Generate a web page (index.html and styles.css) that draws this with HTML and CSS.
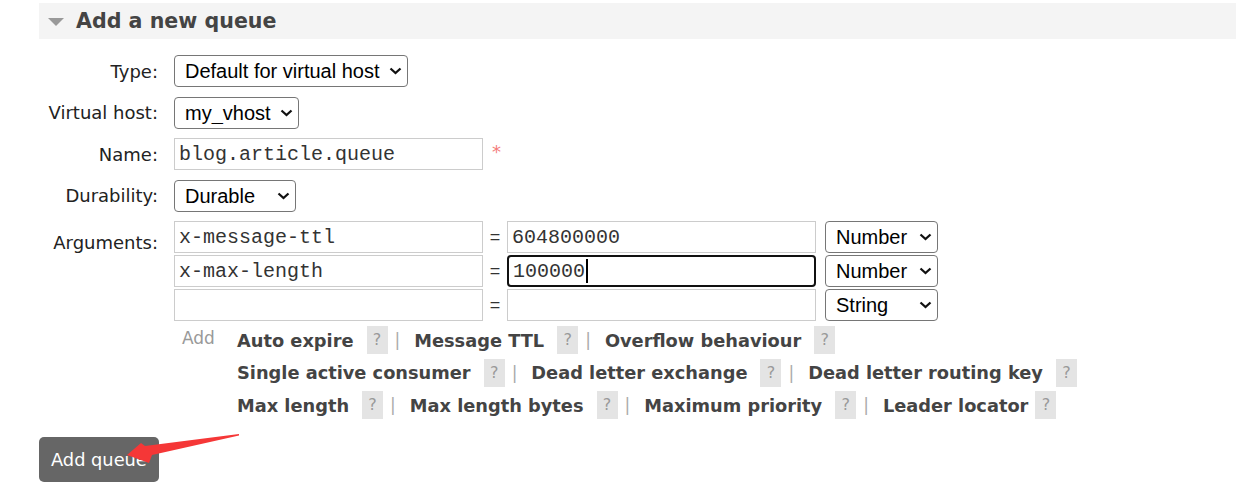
FILE: index.html
```html
<!DOCTYPE html>
<html lang="en">
<head>
    <meta charset="UTF-8">
    <meta name="viewport" content="width=device-width, initial-scale=1.0">
    <title>Queues</title>
    <link rel="stylesheet" href="styles.css">
</head>
<body>
    <div class="page">
        <div class="section-head">
            <span class="toggle"></span>
            <h2>Add a new queue</h2>
        </div>

        <form class="queue-form">
            <label class="field-label">Type:</label>
            <div class="field">
                <span class="select-wrap">
                    <select class="sel sel-type"><option>Default for virtual host</option></select>
                    <svg class="chevron" width="13" height="8" viewBox="0 0 13 8"><path d="M1.5 1.5 L6.5 6 L11.5 1.5" fill="none" stroke="#111" stroke-width="2.3"/></svg>
                </span>
            </div>

            <label class="field-label">Virtual host:</label>
            <div class="field">
                <span class="select-wrap">
                    <select class="sel sel-vhost"><option>my_vhost</option></select>
                    <svg class="chevron" width="13" height="8" viewBox="0 0 13 8"><path d="M1.5 1.5 L6.5 6 L11.5 1.5" fill="none" stroke="#111" stroke-width="2.3"/></svg>
                </span>
            </div>

            <label class="field-label">Name:</label>
            <div class="field">
                <input type="text" class="text-input" value="blog.article.queue">
                <span class="required">*</span>
            </div>

            <label class="field-label">Durability:</label>
            <div class="field">
                <span class="select-wrap">
                    <select class="sel sel-durability"><option>Durable</option></select>
                    <svg class="chevron" width="13" height="8" viewBox="0 0 13 8"><path d="M1.5 1.5 L6.5 6 L11.5 1.5" fill="none" stroke="#111" stroke-width="2.3"/></svg>
                </span>
            </div>

            <label class="field-label args-label">Arguments:</label>
            <div class="args">
                <div class="arg-row">
                    <input type="text" class="text-input" value="x-message-ttl">
                    <span class="eq">=</span>
                    <input type="text" class="text-input" value="604800000">
                    <span class="select-wrap arg-type">
                        <select class="sel sel-argtype"><option>Number</option></select>
                        <svg class="chevron" width="13" height="8" viewBox="0 0 13 8"><path d="M1.5 1.5 L6.5 6 L11.5 1.5" fill="none" stroke="#111" stroke-width="2.3"/></svg>
                    </span>
                </div>
                <div class="arg-row">
                    <input type="text" class="text-input" value="x-max-length">
                    <span class="eq">=</span>
                    <div class="text-input focused">100000<span class="caret"></span></div>
                    <span class="select-wrap arg-type">
                        <select class="sel sel-argtype"><option>Number</option></select>
                        <svg class="chevron" width="13" height="8" viewBox="0 0 13 8"><path d="M1.5 1.5 L6.5 6 L11.5 1.5" fill="none" stroke="#111" stroke-width="2.3"/></svg>
                    </span>
                </div>
                <div class="arg-row">
                    <input type="text" class="text-input" value="">
                    <span class="eq">=</span>
                    <input type="text" class="text-input" value="">
                    <span class="select-wrap arg-type">
                        <select class="sel sel-argtype"><option>String</option></select>
                        <svg class="chevron" width="13" height="8" viewBox="0 0 13 8"><path d="M1.5 1.5 L6.5 6 L11.5 1.5" fill="none" stroke="#111" stroke-width="2.3"/></svg>
                    </span>
                </div>

                <div class="arg-add">
                    <span class="add-label">Add</span>
                    <div class="arg-links">
                        <div class="link-line">
                            <span class="arg-link">Auto expire</span><span class="help">?</span><span class="sep">|</span>
                            <span class="arg-link">Message TTL</span><span class="help">?</span><span class="sep">|</span>
                            <span class="arg-link">Overflow behaviour</span><span class="help">?</span>
                        </div>
                        <div class="link-line">
                            <span class="arg-link">Single active consumer</span><span class="help">?</span><span class="sep">|</span>
                            <span class="arg-link">Dead letter exchange</span><span class="help">?</span><span class="sep">|</span>
                            <span class="arg-link">Dead letter routing key</span><span class="help">?</span>
                        </div>
                        <div class="link-line">
                            <span class="arg-link">Max length</span><span class="help">?</span><span class="sep">|</span>
                            <span class="arg-link">Max length bytes</span><span class="help">?</span><span class="sep">|</span>
                            <span class="arg-link">Maximum priority</span><span class="help">?</span><span class="sep">|</span>
                            <span class="arg-link">Leader locator</span><span class="help help-tight">?</span>
                        </div>
                    </div>
                </div>
            </div>
        </form>

        <button class="btn-add">Add queue</button>

        <!-- red pointer drawn over the button -->
        <svg class="pointer" width="125" height="40" viewBox="0 0 125 40">
            <polygon points="119,6 25,18 21,15 7,27 29,35 32,27 119,7.6" fill="#f53737"/>
        </svg>
    </div>
</body>
</html>
```

FILE: styles.css
```css
body {
    margin: 0;
    font-family: "DejaVu Sans", Verdana, sans-serif;
    color: #222;
    background: #fff;
}
.page {
    position: relative;
    padding: 3px 0 0 39px;
}
.section-head {
    display: flex;
    align-items: center;
    height: 36px;
    background: #f4f4f4;
}
.toggle {
    width: 0;
    height: 0;
    margin: 2px 12px 0 9px;
    border-left: 8px solid transparent;
    border-right: 8px solid transparent;
    border-top: 8px solid #999;
}
.section-head h2 {
    margin: 0;
    font-size: 20.6px;
    font-weight: bold;
    color: #444;
}
.queue-form {
    display: grid;
    grid-template-columns: 119px auto;
    column-gap: 16px;
    row-gap: 9.5px;
    margin-top: 16px;
}
.field-label {
    text-align: right;
    font-size: 18px;
    align-self: center;
    white-space: nowrap;
}
.args-label {
    align-self: start;
    padding-top: 11px;
}
.field {
    display: flex;
    align-items: center;
}
.select-wrap {
    position: relative;
    display: inline-flex;
}
.chevron {
    position: absolute;
    right: 6px;
    top: 50%;
    margin-top: -4px;
    pointer-events: none;
}
.sel {
    -webkit-appearance: none;
    appearance: none;
    box-sizing: border-box;
    height: 32px;
    font-family: "Liberation Sans", Arial, sans-serif;
    font-size: 20px;
    color: #000;
    background: #fff;
    border: 1px solid #767676;
    border-radius: 4px;
    padding: 0 24px 0 10px;
}
.sel-type { width: 234px; }
.sel-vhost { width: 125px; }
.sel-durability { width: 122px; }
.sel-argtype { width: 113px; }
.arg-type {
    margin-left: 9px;
}
.text-input {
    box-sizing: border-box;
    width: 309px;
    height: 32px;
    padding: 0 4px;
    font-family: "Liberation Mono", "Courier New", monospace;
    font-size: 20px;
    color: #333;
    border: 1px solid #ccc;
    border-radius: 0;
    outline: none;
    background: #fff;
}
div.text-input {
    display: flex;
    align-items: center;
}
.text-input.focused {
    border: 2px solid #111;
    border-radius: 4px;
    padding-left: 4px;
}
.caret {
    display: inline-block;
    width: 2px;
    height: 24px;
    margin-left: 1px;
    background: #000;
}
.required {
    margin-left: 9px;
    margin-top: -6px;
    font-size: 18px;
    color: #f47c7c;
}
.args {
    display: flex;
    flex-direction: column;
    gap: 2px;
}
.arg-row {
    display: flex;
    align-items: center;
}
.eq {
    width: 24px;
    text-align: center;
    font-family: "Liberation Sans", Arial, sans-serif;
    font-size: 18px;
    color: #333;
}
.arg-add {
    display: flex;
    margin-top: 3px;
}
.add-label {
    width: 55px;
    padding: 2px 0 0 8px;
    font-size: 17px;
    color: #999;
}
.arg-links {
    display: flex;
    flex-direction: column;
    gap: 4.5px;
}
.link-line {
    display: flex;
    align-items: center;
    height: 28px;
}
.arg-link {
    font-size: 17.8px;
    font-weight: bold;
    color: #444;
    white-space: nowrap;
}
.help {
    width: 21px;
    height: 28px;
    margin-left: 13px;
    line-height: 28px;
    text-align: center;
    font-size: 16px;
    color: #999;
    background: #e4e4e4;
}
.help-tight {
    margin-left: 7px;
}
.sep {
    margin: 0 14px 0 7px;
    font-size: 17px;
    color: #aaa;
}
.btn-add {
    margin-top: 18px;
    padding: 0 12px;
    height: 45px;
    font-family: "DejaVu Sans", Verdana, sans-serif;
    font-size: 17.8px;
    color: #fff;
    background: #666;
    border: none;
    border-radius: 5px;
}
.pointer {
    position: absolute;
    left: 120px;
    top: 428px;
}
```
